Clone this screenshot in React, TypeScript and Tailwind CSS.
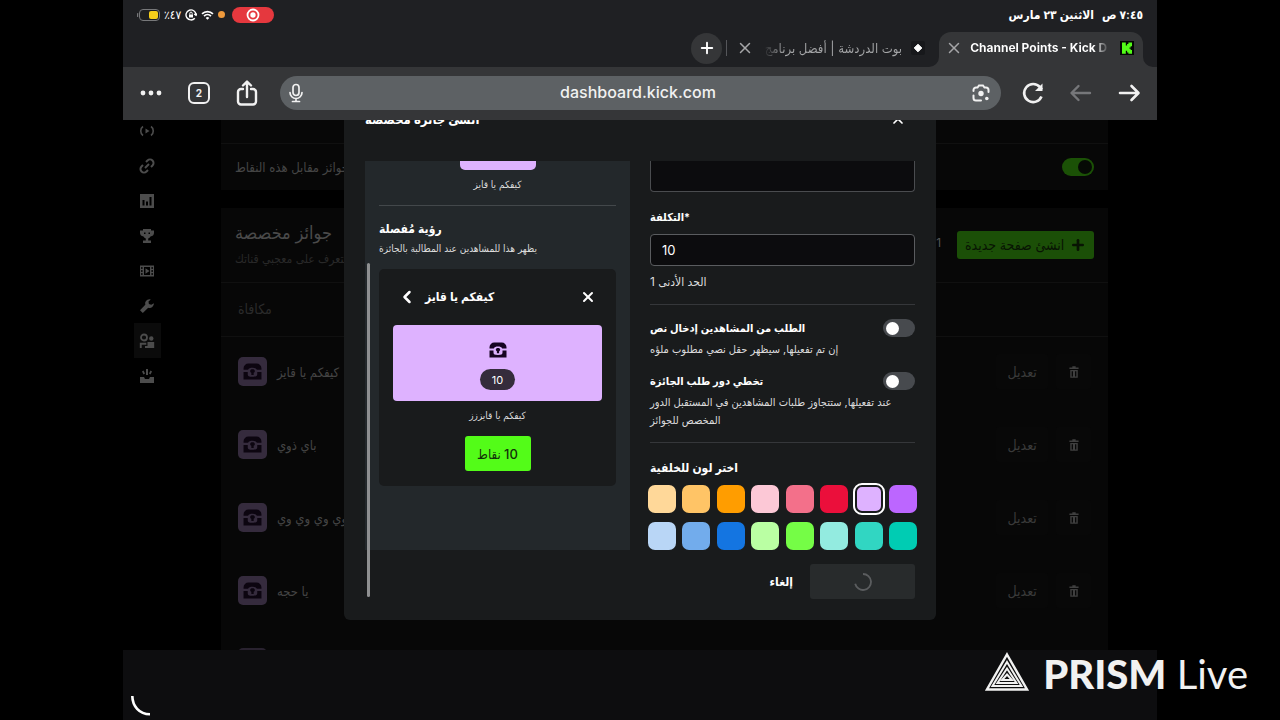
import type { ReactNode } from 'react';
import { ChevronLeft, Plus, X } from 'lucide-react';

const swatches = [
  'bg-[#ffd899]', 'bg-[#ffc466]', 'bg-[#ff9d00]', 'bg-[#fcc8d6]',
  'bg-[#f3708a]', 'bg-[#eb0f3b]', 'bg-[#deb2ff]', 'bg-[#bc66ff]',
  'bg-[#b9d6f6]', 'bg-[#72acec]', 'bg-[#1475e1]', 'bg-[#baffa3]',
  'bg-[#75fd46]', 'bg-[#93ebe0]', 'bg-[#31d6c2]', 'bg-[#00ccb3]',
];

const rewards = ['كيفكم يا قايز', 'باي ذوي', 'وي وي وي وي', 'يا حجه'];

function Chest({ className }: { className: string }) {
  return (
    <svg viewBox="0 0 18 16" className={className} fill="currentColor" aria-hidden="true">
      <path d="M.5 6.400V5.200A4.700 4.700 0 0 1 5.200.5h7.600a4.700 4.700 0 0 1 4.700 4.700v1.200h-4.300C12.600 5.200 11 4.600 9 4.600s-3.600.6-4.200 1.800z" />
      <path d="M.5 8.600h4v2c0 2 1.200 2.400 4.500 2.400s4.500-.4 4.500-2.400v-2h4v7H.5z" />
      <path d="M6.800 7.500C6.800 6.600 7.700 6 9 6s2.200.6 2.200 1.500c0 .9-.5 1.400-1.100 1.800v2H7.900v-2c-.6-.4-1.100-.9-1.100-1.800z" />
    </svg>
  );
}

function SideIcon({ label, active, children }: { label: string; active?: boolean; children: ReactNode }) {
  return (
    <a
      href="#"
      aria-label={label}
      className={
        active
          ? 'flex h-[35px] w-[27px] items-center justify-center bg-[#0b0b0b] text-[#4c4c4c]'
          : 'flex h-[35px] w-[27px] items-center justify-center text-[#4c4c4c]'
      }
    >
      <svg viewBox="0 0 16 16" className="size-4" fill="currentColor" aria-hidden="true">
        {children}
      </svg>
    </a>
  );
}

function Sidebar() {
  return (
    <nav className="-mt-[7px] flex w-[49px] shrink-0 flex-col items-center">
      <SideIcon label="البث">
        <path d="M6.500 5.500v5L10.500 8z" />
        <path d="M4 3.500C1 5.500 1 10.500 4 12.500M12 3.500c3 2 3 7 0 9" fill="none" stroke="currentColor" strokeWidth="1.600" />
      </SideIcon>
      <SideIcon label="الروابط">
        <path d="M6 10l4-4M7 4l1.500-1.500a3.500 3.500 0 0 1 5 5L12 9M9 12l-1.500 1.500a3.500 3.500 0 0 1-5-5L4 7" fill="none" stroke="currentColor" strokeWidth="2" />
      </SideIcon>
      <SideIcon label="الإحصائيات">
        <path fillRule="evenodd" d="M1 1h14v14H1zM3.500 7v5.500h2V7zM7 8.500v4h2v-4zM10.500 4v8.500h2V4z" />
      </SideIcon>
      <SideIcon label="الإنجازات">
        <path d="M4 1h8v1.500h3V5c0 2-1.500 3.200-3.500 3.500-.5 1-1.300 1.600-2.300 1.900V12.500h2.800V15H4v-2.500h2.800v-2.100c-1-.3-1.800-.9-2.300-1.900C2.500 8.200 1 7 1 5V2.500h3z" />
        <path d="M5 4.500h1.500V6H5zM9.500 4.500H11V6H9.500z" fill="#000" />
      </SideIcon>
      <SideIcon label="المقاطع">
        <path fillRule="evenodd" d="M1 2.500h14v11H1zM2.200 4v2h1.300V4zm0 3v2h1.300V7zm0 3v2h1.300v-2zm10.300-6v2h1.300V4zm0 3v2h1.300V7zm0 3v2h1.300v-2zM5 4v8h6V4z" />
        <path d="M6.500 5.200v5.600L10.500 8z" />
      </SideIcon>
      <SideIcon label="الأدوات">
        <path d="M10.500 1.200a4.300 4.300 0 0 0-4.200 5.600L1 12.200 3.800 15l5.400-5.300a4.300 4.300 0 0 0 5.700-4.500l-2.600 1.500-2.400-.7-.4-2.400 2.300-2.200z" />
      </SideIcon>
      <SideIcon label="المجتمع" active>
        <circle cx="5" cy="4.500" r="3" fill="none" stroke="currentColor" strokeWidth="1.800" />
        <circle cx="12.300" cy="5.500" r="2.200" />
        <path d="M.8 9.800h6.500v1.900H2.700V15H.8zM8.500 9h6.700v6H6v-2h2.500z" />
      </SideIcon>
      <SideIcon label="الجوائز">
        <path d="M7 1h2v6H7zM3 3.500l1.500-1 1.500 3-1.500 1zM13 3.500l-1.500-1-1.500 3 1.500 1zM1 9h4l1 2h4l1-2h4v6H1z" />
      </SideIcon>
    </nav>
  );
}

function Header() {
  return (
    <header className="bg-[#1f2023] text-white">
      <div className="flex h-[29px] items-center justify-between px-[14px]">
        <div className="flex items-center gap-1">
          <svg viewBox="0 0 23 12" className="h-3 w-[23px]" aria-label="البطارية">
            <rect x="2.500" y=".5" width="20" height="11" rx="3.500" fill="#1f2023" stroke="#77787a" />
            <rect x="0" y="4" width="1.200" height="4" rx=".6" fill="#77787a" />
            <rect x="12" y="2" width="9" height="8" rx="2" fill="#f7cf1a" />
          </svg>
          <span dir="rtl" className="text-[12px] font-medium leading-4">٤٧٪</span>
          <svg viewBox="0 0 12 12" className="size-3" fill="none" stroke="currentColor" strokeWidth="1.400" aria-hidden="true">
            <path d="M9.800 9.200A5 5 0 1 1 11 5.500M9.200 5l1.800 1.300L12 4.500" />
            <rect x="4" y="5.500" width="4" height="3" fill="currentColor" stroke="none" />
            <path d="M4.800 5.500V4.300a1.200 1.200 0 0 1 2.400 0v1.200" strokeWidth="1" />
          </svg>
          <svg viewBox="0 0 14 11" className="h-[10px] w-[13px]" fill="none" stroke="currentColor" strokeWidth="1.900" aria-hidden="true">
            <path d="M1 4.200a8.500 8.500 0 0 1 12 0M3.200 6.700a5.400 5.400 0 0 1 7.600 0" />
            <path d="M7 10.800L5 8.700a3 3 0 0 1 4 0z" fill="currentColor" stroke="none" />
          </svg>
          <span className="size-[7px] rounded-full bg-[#ef9a3c]" />
          <span className="ml-[3px] flex h-4 w-[42px] items-center justify-center rounded-full bg-[#e5383e]">
            <svg viewBox="0 0 14 14" className="size-[14px]" aria-label="تسجيل">
              <circle cx="7" cy="7" r="5.500" fill="none" stroke="#fff" strokeWidth="1.800" />
              <circle cx="7" cy="7" r="2.700" fill="#fff" />
            </svg>
          </span>
        </div>
        <div dir="rtl" className="flex gap-2 text-[12px] font-semibold leading-4">
          <span>٧:٤٥ ص</span>
          <span>الاثنين ٢٣ مارس</span>
        </div>
      </div>
      <div className="flex h-[38px] items-end justify-end pr-[14px]">
        <div className="flex h-[38px] items-center">
          <button aria-label="علامة تبويب جديدة" className="flex size-[31px] items-center justify-center rounded-full bg-[#353638]">
            <Plus className="size-[18px]" strokeWidth={2.5} />
          </button>
          <span className="ml-1 h-4 w-px bg-[#55565a]" />
          <button aria-label="إغلاق" className="ml-[9px] text-[#a5a6a8]">
            <X className="size-[18px]" />
          </button>
          <span dir="rtl" className="ml-[9px] w-[139px] overflow-hidden whitespace-nowrap bg-linear-to-l from-[#a5a6a8] from-85% to-transparent bg-clip-text text-[13px] leading-5 text-transparent">
            بوت الدردشة | أفضل برنامج
          </span>
          <svg viewBox="0 0 14 14" className="ml-[9px] size-[14px]" aria-hidden="true">
            <rect width="14" height="14" rx="2" fill="#17181b" />
            <path d="M7 3.200L10.800 7 7 10.800 3.200 7z" fill="#fff" stroke="#fff" strokeLinejoin="round" />
          </svg>
        </div>
        <svg viewBox="0 0 10 10" className="ml-1 size-[10px] fill-[#353638]" aria-hidden="true">
          <path d="M10 0v10H0A10 10 0 0 0 10 0z" />
        </svg>
        <div className="flex h-[35px] w-[204px] items-center rounded-t-[12px] bg-[#353638] px-[6px] pb-[3px]">
          <button aria-label="إغلاق" className="text-[#a5a6a8]">
            <X className="size-[18px]" />
          </button>
          <span className="ml-[7px] w-[141px] whitespace-nowrap bg-linear-to-r from-white from-88% to-[#454648] to-98% bg-clip-text text-[12px] font-bold leading-5 text-transparent">
            Channel Points - Kick D
          </span>
          <svg viewBox="0 0 14 14" className="ml-[9px] size-[14px]" aria-label="Kick">
            <rect width="14" height="14" fill="#050805" />
            <path d="M2 1.500h3.800v3h1.300V3h1.300V1.500H12v3.800h-1.300v1.200H9.500v1.200h1.200v1.200H12v3.800H8.400v-1.300H7.100V9.800H5.800v2.900H2z" fill="#53fc18" />
          </svg>
        </div>
        <svg viewBox="0 0 10 10" className="-mr-[10px] size-[10px] fill-[#353638]" aria-hidden="true">
          <path d="M0 0v10h10A10 10 0 0 1 0 0z" />
        </svg>
      </div>
      <div className="flex h-[53px] items-center bg-[#353638] px-4 pb-[2px] text-[#f1f1f1]">
        <button aria-label="المزيد" className="flex w-6 justify-center">
          <svg viewBox="0 0 22 6" className="h-[6px] w-[22px]" fill="currentColor" aria-hidden="true">
            <circle cx="3" cy="3" r="2.400" /><circle cx="11" cy="3" r="2.400" /><circle cx="19" cy="3" r="2.400" />
          </svg>
        </button>
        <button className="ml-[25px] flex size-[22px] items-center justify-center rounded-[6px] border-2 border-current text-[10px] font-bold leading-none">2</button>
        <button aria-label="مشاركة" className="ml-[25px]">
          <svg viewBox="0 0 24 26" className="h-[26px] w-6" fill="none" stroke="currentColor" strokeWidth="2.400" strokeLinecap="round" strokeLinejoin="round" aria-hidden="true">
            <path d="M8 9H6a3 3 0 0 0-3 3v9.500a3 3 0 0 0 3 3h12a3 3 0 0 0 3-3V12a3 3 0 0 0-3-3h-2M12 17V2M8 5.500L12 1.500l4 4" />
          </svg>
        </button>
        <div className="ml-[21px] flex h-[34px] min-w-0 flex-1 items-center rounded-full bg-[#5d6164] pl-[7px] pr-[10px]">
          <svg viewBox="0 0 18 20" className="h-5 w-[18px] shrink-0" fill="none" stroke="currentColor" strokeWidth="1.700" strokeLinecap="round" aria-hidden="true">
            <rect x="6" y="1.500" width="6" height="11" rx="3" />
            <path d="M3 9.500a6 6 0 0 0 12 0M9 15.500v3M5.500 18.500h7" />
          </svg>
          <input
            aria-label="العنوان"
            defaultValue="dashboard.kick.com"
            className="min-w-0 flex-1 bg-transparent pb-[2px] text-center text-[16px] font-medium leading-5 outline-none"
          />
          <svg viewBox="0 0 20 20" className="size-5 shrink-0" fill="none" stroke="currentColor" strokeWidth="2" strokeLinecap="round" aria-label="بحث بالصورة">
            <path d="M2.500 8V7A2.500 2.500 0 0 1 5 4.500h1.500L8 2.500h4l1.500 2H15A2.500 2.500 0 0 1 17.500 7v2M2.500 12.500V15A2.500 2.500 0 0 0 5 17.500h5" />
            <circle cx="10" cy="10.500" r="2.700" fill="currentColor" stroke="none" />
            <circle cx="15.800" cy="15.500" r="1.800" fill="currentColor" stroke="none" />
          </svg>
        </div>
        <button aria-label="إعادة التحميل" className="ml-5">
          <svg viewBox="0 0 24 24" className="size-6" fill="none" stroke="currentColor" strokeWidth="2.600" aria-hidden="true">
            <path d="M20.500 15.500A9 9 0 1 1 19 6.200l2 2.300" />
            <path d="M21.500 2.500V10H14z" fill="currentColor" stroke="none" />
          </svg>
        </button>
        <button aria-label="رجوع" className="ml-6 text-[#76777a]">
          <svg viewBox="0 0 24 24" className="size-6" fill="none" stroke="currentColor" strokeWidth="2.400" strokeLinecap="round" strokeLinejoin="round" aria-hidden="true">
            <path d="M21 12H3M9.500 5L2.500 12l7 7" />
          </svg>
        </button>
        <button aria-label="تقدم" className="ml-6">
          <svg viewBox="0 0 24 24" className="size-6" fill="none" stroke="currentColor" strokeWidth="2.600" strokeLinecap="round" strokeLinejoin="round" aria-hidden="true">
            <path d="M3 12h18M14.500 5l7 7-7 7" />
          </svg>
        </button>
      </div>
    </header>
  );
}

function Dashboard() {
  return (
    <div className="flex h-full">
      <Sidebar />
      <main className="mx-[49px] flex min-w-0 flex-1 flex-col">
        <section className="bg-[#070707]">
          <div className="h-6 border-b border-[#101010]" />
          <label className="flex h-[46px] items-center justify-between px-[14px]">
            <span dir="rtl" className="text-[13px] leading-4 text-[#454545]">جوائز مقابل هذه النقاط</span>
            <input type="checkbox" defaultChecked className="peer sr-only" />
            <span className="flex h-[18px] w-8 items-center justify-end rounded-full bg-[#1b5106] px-[2px]">
              <span className="size-[14px] rounded-full bg-[#060a05]" />
            </span>
          </label>
        </section>
        <section className="mt-[18px] flex-1 overflow-hidden bg-[#070707]">
          <div className="flex h-[75px] justify-between border-b border-[#101010] px-[14px]">
            <div className="pt-[13px]">
              <h2 dir="rtl" className="text-left text-[18px] font-medium leading-6 text-[#4a4a4a]">جوائز مخصصة</h2>
              <p dir="rtl" className="mt-1 text-left text-[12px] leading-5 text-[#292929]">والتعرف على معجبي قناتك</p>
            </div>
            <div className="flex items-start gap-4 pt-[23px]">
              <span className="pt-1 text-[12px] leading-4 text-[#555]">1</span>
              <button className="flex h-7 w-[137px] items-center justify-center gap-[6px] rounded-[3px] bg-[#1b4f07] text-[14px] font-medium leading-5 text-[#081403]">
                <span dir="rtl">انشئ صفحة جديدة</span>
                <Plus className="size-4" strokeWidth={4} />
              </button>
            </div>
          </div>
          <table className="w-full text-left text-[13px] leading-4">
            <thead>
              <tr className="h-[53px] border-b border-[#101010]">
                <th dir="rtl" className="px-[17px] text-left text-[14px] font-normal text-[#2b2b2b]">مكافاة</th>
                <th />
              </tr>
            </thead>
            <tbody>
              {rewards.map((name) => (
                <tr key={name} className="h-[73px]">
                  <td className="px-[17px] pb-[2px] text-[#444]">
                    <span className="flex items-center gap-[10px]">
                      <span className="flex size-[29px] items-center justify-center rounded-[5px] bg-[#352b3d] text-[#0c0510]">
                        <Chest className="w-[19px]" />
                      </span>
                      <span dir="rtl">{name}</span>
                    </span>
                  </td>
                  <td className="px-[17px] pb-[2px]">
                    <span className="flex justify-end gap-2">
                      <button className="h-[35px] w-[52px] rounded-[3px] bg-[#080808] text-[14px] text-[#3a3a3a]">تعديل</button>
                      <button aria-label="حذف" className="flex size-[35px] items-center justify-center rounded-[3px] bg-[#080808] text-[#3f3f3f]">
                        <svg viewBox="0 0 12 14" className="h-3 w-[10px]" fill="currentColor" aria-hidden="true">
                          <path fillRule="evenodd" d="M4 0h4v1.500h3.500v1.800H.5V1.500H4zM1.500 4.500h9V14h-9zM3.200 6v6.400h1.600V6zm4 0v6.400h1.600V6z" />
                        </svg>
                      </button>
                    </span>
                  </td>
                </tr>
              ))}
              <tr>
                <td className="px-[17px] pt-[20px]"><span className="block size-[29px] rounded-[5px] bg-[#29222f]" /></td>
                <td />
              </tr>
            </tbody>
          </table>
        </section>
      </main>
    </div>
  );
}

function ToggleRow({ title, text }: { title: string; text: string }) {
  return (
    <div>
      <label className="flex h-[22px] items-center justify-between">
        <span dir="rtl" className="text-[11px] font-semibold leading-4">{title}</span>
        <input type="checkbox" className="sr-only" />
        <span className="flex h-[18px] w-8 items-center rounded-full bg-[#474a4e] px-[3px]">
          <span className="size-[13px] rounded-full bg-white" />
        </span>
      </label>
      <p dir="rtl" className="mt-px pr-4 text-left text-[11px] leading-[18px] text-[#dcdcdc]">{text}</p>
    </div>
  );
}

function RewardDialog() {
  return (
    <div role="dialog" aria-label="أنشئ جائزة مخصصة" className="w-[592px] max-w-full rounded-[6px] bg-[#191b1c] px-[21px] pb-[21px] text-white">
      <div className="flex h-[64px] items-start justify-between pt-3">
        <h1 dir="rtl" className="text-[13px] font-bold leading-5">أنشئ جائزة مخصصة</h1>
        <button aria-label="إغلاق" className="mr-[9px] mt-[2px]"><X className="size-4" strokeWidth={2.5} /></button>
      </div>
      <div className="flex gap-5">
        <div className="flex flex-1 items-stretch">
          <aside className="relative h-[389px] flex-1 bg-[#23282b] px-[14px]">
            <span className="absolute left-[2px] top-[102px] h-[334px] w-[3px] rounded-full bg-[#8f9091]" />
            <div className="mx-auto h-[9px] w-[76px] rounded-b-[5px] bg-[#deb2ff]" />
            <p dir="rtl" className="mt-[6px] text-center text-[10px] leading-4 text-[#dcdcdc]">كيفكم يا قايز</p>
            <hr className="mt-[13px] border-[#43484b]" />
            <h2 dir="rtl" className="mt-[13px] text-left text-[12px] font-semibold leading-5">رؤية مُفصلة</h2>
            <p dir="rtl" className="whitespace-nowrap text-left text-[10px] leading-[18px] text-[#dcdcdc]">يظهر هذا للمشاهدين عند المطالبة بالجائزة</p>
            <div className="mt-3 flex h-[217px] flex-col items-center rounded-[5px] bg-[#191b1c] px-[14px]">
              <div className="flex h-14 w-full items-center">
                <ChevronLeft className="ml-1 size-5" strokeWidth={3} />
                <span dir="rtl" className="ml-2 text-[12px] font-semibold leading-4">كيفكم يا قايز</span>
                <X className="ml-auto mr-[6px] size-4" strokeWidth={3} />
              </div>
              <div className="flex h-[76px] w-full flex-col items-center rounded-[4px] bg-[#deb2ff] pt-[17px]">
                <Chest className="h-4 w-[18px] text-[#170522]" />
                <span className="mt-[11px] flex h-[21px] w-[35px] items-center justify-center rounded-full bg-[#352c3c] text-[11px] leading-4">10</span>
              </div>
              <p dir="rtl" className="mt-[6px] text-[10px] leading-4 text-[#dcdcdc]">كيفكم يا قايززز</p>
              <button dir="rtl" className="mt-[13px] h-[35px] w-[66px] rounded-[3px] bg-[#53fc18] text-[13px] font-medium leading-5 text-[#12300a]">10 نقاط</button>
            </div>
          </aside>
        </div>
        <form className="flex flex-1 flex-col">
          <input aria-label="الوصف" className="h-[31px] w-full rounded-b-[4px] border border-t-0 border-[#4a4c4f] bg-[#0c0c0e] px-[11px]" />
          <label htmlFor="cost" className="mt-[17px] text-[11px] font-semibold leading-4">التكلفة*</label>
          <input id="cost" defaultValue="10" className="mt-[9px] h-8 w-full rounded-[4px] border border-[#5a5c5f] bg-[#0c0c0e] px-[11px] text-[13px] leading-5" />
          <p dir="rtl" className="mt-2 text-left text-[12px] leading-4 text-[#dcdcdc]">الحد الأدنى 1</p>
          <hr className="mb-3 mt-[14px] border-[#35373a]" />
          <ToggleRow title="الطلب من المشاهدين إدخال نص" text="إن تم تفعيلها, سيظهر حقل نصي مطلوب ملؤه" />
          <div className="h-3" />
          <ToggleRow title="تخطي دور طلب الجائزة" text="عند تفعيلها, ستتجاوز طلبات المشاهدين في المستقبل الدور المخصص للجوائز" />
          <hr className="mt-[13px] border-[#35373a]" />
          <p dir="rtl" className="mt-[17px] text-left text-[12px] font-semibold leading-4">اختر لون للخلفية</p>
          <div className="-mx-[2px] mt-[9px] grid grid-cols-[repeat(8,28px)] justify-between gap-y-[9px]">
            {swatches.map((color, i) => (
              <button
                key={color}
                type="button"
                aria-label={`لون ${i + 1}`}
                className={`size-7 rounded-[7px] ${color} ${i === 6 ? 'border-2 border-[#191b1c] outline-2 outline-white' : ''}`}
              />
            ))}
          </div>
          <div className="mt-[14px] flex justify-end gap-[17px]">
            <button type="button" className="text-[12px] font-semibold">إلغاء</button>
            <button type="button" aria-label="حفظ" className="flex h-[35px] w-[105px] items-center justify-center rounded-[3px] bg-[#282b2c] text-[#5b5d5f]">
              <svg viewBox="0 0 18 18" className="size-[18px]" fill="none" stroke="currentColor" strokeWidth="1.800" aria-hidden="true">
                <path d="M9 1a8 8 0 1 1-7.800 9.800" />
              </svg>
            </button>
          </div>
        </form>
      </div>
    </div>
  );
}

export default function App() {
  return (
    <div className="relative flex h-screen bg-black px-[9.6%] [font-family:Inter,'DejaVu_Sans_Condensed','DejaVu_Sans',sans-serif]">
      <div className="flex min-w-0 flex-1 flex-col">
        <Header />
        <div className="relative min-h-0 flex-1 overflow-hidden bg-black">
          <Dashboard />
          <div className="absolute inset-0 flex items-end justify-center pb-[30px]">
            <RewardDialog />
          </div>
        </div>
        <footer className="flex h-[70px] items-end bg-[#0d0d0f] px-2 pb-1">
          <svg viewBox="0 0 20 20" className="size-5" fill="none" stroke="#fff" strokeWidth="2.600" aria-label="جار التحميل">
            <path d="M1.300 0C1.500 10 8 18.200 19 18.300" />
          </svg>
        </footer>
      </div>
      <div className="absolute bottom-[22px] right-8 flex items-center gap-[14px] text-[#f1f1f1]">
        <svg viewBox="0 0 44 39" className="mb-[5px] h-[39px] w-11" fill="none" stroke="currentColor" strokeWidth="2.400" aria-hidden="true">
          <path d="M22 2.500L42 37.500H2z" />
          <path d="M22 10L36.500 34H7.500z" strokeWidth="2" />
          <path d="M22 16.500L31.500 31h-19z" strokeWidth="2" />
          <path d="M22 22.500L27 28H17z" strokeWidth="2" />
        </svg>
        <p className="text-[40px] leading-[48px] [font-family:Lato,sans-serif]">
          <span className="font-black">PRISM</span> <span>Live</span>
        </p>
      </div>
    </div>
  );
}
